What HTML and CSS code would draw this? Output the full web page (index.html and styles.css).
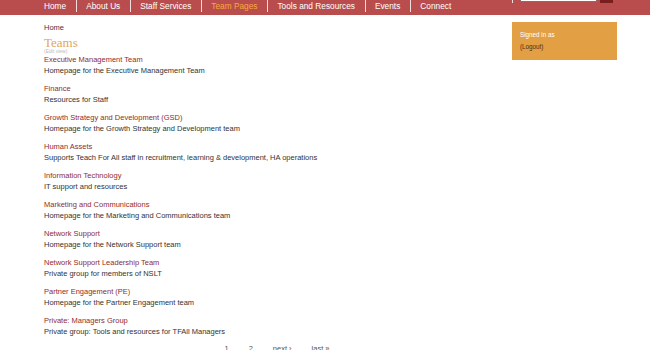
FILE: index.html
```html
<!DOCTYPE html>
<html lang="en">
<head>
    <meta charset="UTF-8">
    <title>Teams</title>
    <link rel="stylesheet" href="styles.css">
</head>
<body>
    <div class="nav">
        <ul class="menu">
            <li><a href="#">Home</a></li>
            <li><a href="#">About Us</a></li>
            <li><a href="#">Staff Services</a></li>
            <li class="active"><a href="#">Team Pages</a></li>
            <li><a href="#">Tools and Resources</a></li>
            <li><a href="#">Events</a></li>
            <li><a href="#">Connect</a></li>
        </ul>
        <div class="search">
            <input type="text" class="search-input">
            <button type="button" class="search-button"></button>
        </div>
    </div>

    <div class="page">
        <div class="content">
            <div class="breadcrumb"><a href="#">Home</a></div>
            <h1>Teams</h1>
            <div class="edit-view">(Edit view)</div>

            <div class="team">
                <a href="#" class="team-title">Executive Management Team</a>
                <div class="team-desc">Homepage for the Executive Management Team</div>
            </div>
            <div class="team">
                <a href="#" class="team-title">Finance</a>
                <div class="team-desc">Resources for Staff</div>
            </div>
            <div class="team">
                <a href="#" class="team-title">Growth Strategy and Development (GSD)</a>
                <div class="team-desc">Homepage for the Growth Strategy and Development team</div>
            </div>
            <div class="team">
                <a href="#" class="team-title">Human Assets</a>
                <div class="team-desc">Supports Teach For All staff in recruitment, learning &amp; development, HA operations</div>
            </div>
            <div class="team">
                <a href="#" class="team-title">Information Technology</a>
                <div class="team-desc">IT support and resources</div>
            </div>
            <div class="team">
                <a href="#" class="team-title">Marketing and Communications</a>
                <div class="team-desc">Homepage for the Marketing and Communications team</div>
            </div>
            <div class="team">
                <a href="#" class="team-title">Network Support</a>
                <div class="team-desc">Homepage for the Network Support team</div>
            </div>
            <div class="team">
                <a href="#" class="team-title">Network Support Leadership Team</a>
                <div class="team-desc">Private group for members of NSLT</div>
            </div>
            <div class="team">
                <a href="#" class="team-title">Partner Engagement (PE)</a>
                <div class="team-desc">Homepage for the Partner Engagement team</div>
            </div>
            <div class="team">
                <a href="#" class="team-title">Private: Managers Group</a>
                <div class="team-desc">Private group: Tools and resources for TFAll Managers</div>
            </div>

            <ul class="pager">
                <li>1</li>
                <li><a href="#">2</a></li>
                <li><a href="#">next ›</a></li>
                <li><a href="#">last »</a></li>
            </ul>
        </div>

        <div class="sidebar">
            <div class="signed-in">Signed in as</div>
            <a href="#" class="logout">(Logout)</a>
        </div>
    </div>
</body>
</html>
```

FILE: styles.css
```css
body {
    margin: 0;
    font-family: 'Liberation Sans', Arial, sans-serif;
    background-color: #fff;
    color: #333;
}
a {
    text-decoration: none;
}

/* top menu */
.nav {
    display: flex;
    height: 15px;
    background-color: #b94d4d;
    padding: 0 37px 0 34px;
}
.menu {
    display: flex;
    list-style: none;
    margin: 0;
    padding: 0;
    height: 12px;
}
.menu li {
    padding: 0 10px 0 9px;
    border-left: 1px solid #f3dede;
    line-height: 12px;
    font-size: 8.3px;
}
.menu li:first-child {
    border-left: none;
    padding-left: 10px;
}
.menu a {
    color: #fff;
}
.menu .active a {
    color: #f7a83a;
}
.search {
    display: flex;
    align-items: flex-end;
    margin-left: auto;
    margin-top: -20px;
    height: 23px;
    padding-left: 7px;
    border-left: 1px solid #f3dede;
}
.search-input {
    box-sizing: border-box;
    width: 77px;
    height: 22px;
    margin: 0 0 1px 0;
    padding: 0;
    border: 1px solid #8c6a6a;
    background-color: #fff;
}
.search-button {
    width: 13px;
    height: 23px;
    margin-left: 3px;
    padding: 0;
    border: none;
    background-color: #7a1d1d;
}

/* page */
.page {
    display: flex;
    align-items: flex-start;
    margin-left: 44px;
}
.content {
    width: 466px;
    margin-top: 8px;
}
.breadcrumb {
    font-size: 7.5px;
    line-height: 9px;
}
.breadcrumb a {
    color: #5e2c2c;
}
h1 {
    margin: 4px 0 0;
    font-family: 'Liberation Serif', 'Times New Roman', serif;
    font-weight: normal;
    font-size: 13px;
    line-height: 13px;
    color: #e2a55b;
}
.edit-view {
    font-size: 5px;
    line-height: 5px;
    color: #bbb;
}
.team {
    margin-bottom: 6px;
    font-size: 7.5px;
}
.team-title {
    display: block;
    line-height: 11px;
    color: #8f2c2c;
}
.team-desc {
    line-height: 12px;
    color: #333;
}
.pager {
    display: flex;
    justify-content: center;
    list-style: none;
    margin: 0;
    padding: 0;
    font-size: 7.5px;
    line-height: 10px;
    color: #555;
}
.pager li {
    padding: 0 10px;
}
.pager a {
    color: #555;
}

/* right column */
.sidebar {
    width: 105px;
    margin: 7px 0 0 2px;
    padding: 7px 8px;
    box-sizing: border-box;
    background-color: #e29f43;
    font-size: 6.3px;
    line-height: 12px;
}
.signed-in {
    color: #fff;
}
.logout {
    display: block;
    color: #4a3018;
}
```
